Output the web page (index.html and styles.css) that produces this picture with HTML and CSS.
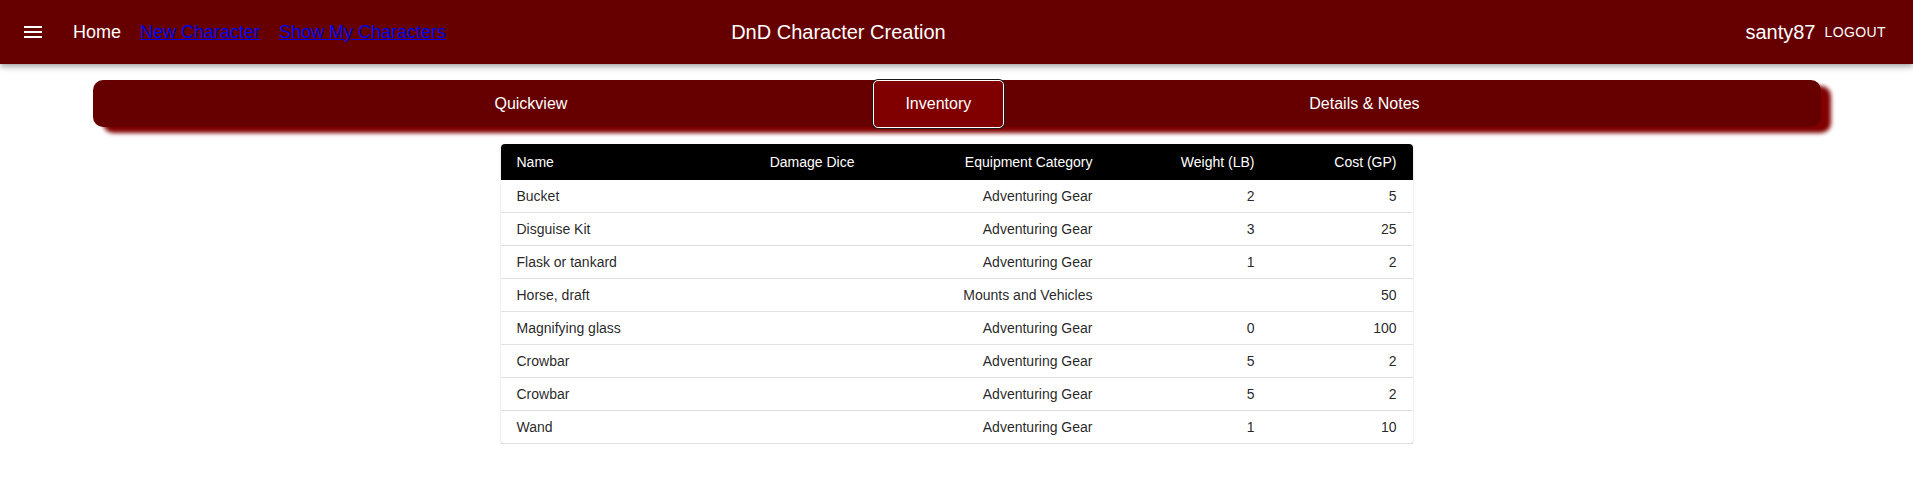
FILE: index.html
```html
<!DOCTYPE html>
<html>
<head>
<meta charset="utf-8">
<link rel="stylesheet" href="styles.css">
</head>
<body>
<header class="appbar">
  <button class="menu-btn" aria-label="menu">
    <svg viewBox="0 0 24 24" width="24" height="24"><path fill="#fff" d="M3 18h18v-2H3v2zm0-5h18v-2H3v2zm0-7v2h18V6H3z"/></svg>
  </button>
  <span class="home">Home</span>
  <a class="navlink" href="#">New Character</a>
  <a class="navlink" href="#">Show My Characters</a>
  <span class="title">DnD Character Creation</span>
  <span class="spacer"></span>
  <span class="user">santy87</span>
  <button class="logout">LOGOUT</button>
</header>

<nav class="tabs">
  <div class="tab">Quickview</div>
  <div class="tab active">Inventory</div>
  <div class="tab">Details &amp; Notes</div>
</nav>

<div class="table-card">
  <table class="inv">
    <thead>
      <tr>
        <th class="c-name">Name</th>
        <th class="c-dice num">Damage Dice</th>
        <th class="c-cat num">Equipment Category</th>
        <th class="c-wt num">Weight (LB)</th>
        <th class="c-cost num">Cost (GP)</th>
      </tr>
    </thead>
    <tbody>
      <tr><td>Bucket</td><td class="num"></td><td class="num">Adventuring Gear</td><td class="num">2</td><td class="num">5</td></tr>
      <tr><td>Disguise Kit</td><td class="num"></td><td class="num">Adventuring Gear</td><td class="num">3</td><td class="num">25</td></tr>
      <tr><td>Flask or tankard</td><td class="num"></td><td class="num">Adventuring Gear</td><td class="num">1</td><td class="num">2</td></tr>
      <tr><td>Horse, draft</td><td class="num"></td><td class="num">Mounts and Vehicles</td><td class="num"></td><td class="num">50</td></tr>
      <tr><td>Magnifying glass</td><td class="num"></td><td class="num">Adventuring Gear</td><td class="num">0</td><td class="num">100</td></tr>
      <tr><td>Crowbar</td><td class="num"></td><td class="num">Adventuring Gear</td><td class="num">5</td><td class="num">2</td></tr>
      <tr><td>Crowbar</td><td class="num"></td><td class="num">Adventuring Gear</td><td class="num">5</td><td class="num">2</td></tr>
      <tr><td>Wand</td><td class="num"></td><td class="num">Adventuring Gear</td><td class="num">1</td><td class="num">10</td></tr>
    </tbody>
  </table>
</div>
</body>
</html>
```

FILE: styles.css
```css
html, body {
  margin: 0;
  padding: 0;
  background: #fff;
  font-family: "Liberation Sans", Arial, sans-serif;
}

.appbar {
  position: relative;
  z-index: 2;
  height: 64px;
  box-sizing: border-box;
  display: flex;
  align-items: center;
  padding: 0 19px 0 24px;
  background: #660000;
  color: #fff;
  box-shadow: 0px 2px 4px -1px rgba(0,0,0,0.2), 0px 4px 5px 0px rgba(0,0,0,0.14), 0px 1px 10px 0px rgba(0,0,0,0.12);
}

.menu-btn {
  display: flex;
  padding: 12px;
  margin: 0 16px 0 -15px;
  border: 0;
  background: transparent;
}

.home {
  font-size: 18px;
  color: #fff;
}

.navlink {
  margin-left: 19px;
  font-size: 18px;
  color: #0000ee;
  text-decoration: underline;
}

.title {
  margin-left: 285px;
  font-size: 20px;
  color: #fff;
}

.spacer {
  flex: 1;
}

.user {
  font-size: 20px;
  color: #fff;
}

.logout {
  margin-left: 1px;
  padding: 6px 8px;
  border: 0;
  background: transparent;
  color: #fff;
  font-family: "Liberation Sans", Arial, sans-serif;
  font-size: 14px;
  letter-spacing: 0.4px;
  line-height: 24px;
}

.tabs {
  display: flex;
  align-items: flex-start;
  height: 47px;
  margin: 16px 92px 0 93px;
  padding: 0 97px;
  background: #660000;
  border-radius: 10px;
  box-shadow: 10px 6px 4px #800000;
}

.tab {
  flex: 1 1 auto;
  height: 47px;
  display: flex;
  align-items: center;
  justify-content: center;
  color: #fff;
  font-size: 16px;
}

.tab.active {
  flex: none;
  box-sizing: border-box;
  width: 131px;
  height: 48px;
  margin: 0 1px;
  background: #800000;
  border: 1px solid #fff;
  border-radius: 5px;
  box-shadow: 0 0 0 1px #1a1a1a;
}

.table-card {
  width: 912px;
  margin: 17px auto 0;
  border-radius: 4px;
  overflow: hidden;
  background: #fff;
  box-shadow: 0px 2px 1px -1px rgba(0,0,0,0.2), 0px 1px 1px 0px rgba(0,0,0,0.14), 0px 1px 3px 0px rgba(0,0,0,0.12);
}

.inv {
  width: 100%;
  border-collapse: collapse;
  table-layout: fixed;
  font-size: 14px;
}

.inv th,
.inv td {
  box-sizing: border-box;
  padding: 6px 16px;
  text-align: left;
}

.inv th {
  background: #000;
  color: #fff;
  font-weight: 500;
  line-height: 24px;
}

.inv td {
  color: rgba(0,0,0,0.87);
  line-height: 20px;
  border-bottom: 1px solid rgb(224,224,224);
}

.inv .num {
  text-align: right;
}

.c-name { width: 250px; }
.c-dice { width: 120px; }
.c-cat { width: 238px; }
.c-wt { width: 162px; }
.c-cost { width: 142px; }
```
